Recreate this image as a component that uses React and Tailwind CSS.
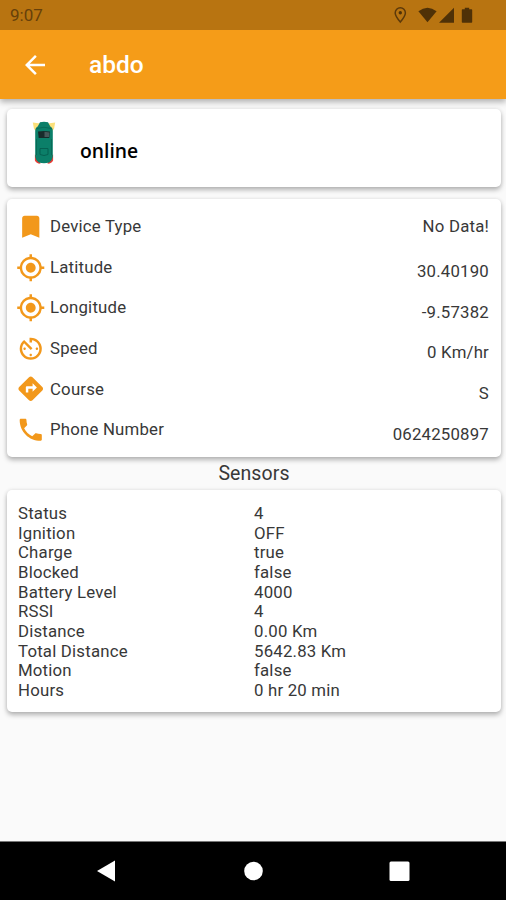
import {
    MdArrowBack,
    MdAvTimer,
    MdBookmark,
    MdDirections,
    MdGpsFixed,
    MdPhone,
} from 'react-icons/md';

const details = [
    { icon: MdBookmark, label: 'Device Type', value: 'No Data!' },
    { icon: MdGpsFixed, label: 'Latitude', value: '30.40190', low: true },
    { icon: MdGpsFixed, label: 'Longitude', value: '-9.57382', low: true },
    { icon: MdAvTimer, label: 'Speed', value: '0 Km/hr', low: true },
    { icon: MdDirections, label: 'Course', value: 'S', low: true },
    { icon: MdPhone, label: 'Phone Number', value: '0624250897', low: true },
];

const sensors = [
    ['Status', '4'],
    ['Ignition', 'OFF'],
    ['Charge', 'true'],
    ['Blocked', 'false'],
    ['Battery Level', '4000'],
    ['RSSI', '4'],
    ['Distance', '0.00 Km'],
    ['Total Distance', '5642.83 Km'],
    ['Motion', 'false'],
    ['Hours', '0 hr 20 min'],
];

function StatusBar() {
    return (
        <div className="h-[30px] bg-[#b87411] flex items-center justify-between pl-[10px] pr-[33px] text-[#66400a]">
            <span className="text-[17px] leading-none">9:07</span>
            <svg width="80" height="18" viewBox="0 0 80 18" fill="#4f3107">
                <path fill="none" stroke="#5c390a" strokeWidth="1.5" d="M7.3 16C4.5 12.600 2.200 9.500 2.200 6.900a5.100 5.100 0 0 1 10.200 0C12.400 9.500 10.100 12.600 7.300 16Z" />
                <circle cx="7.300" cy="6.800" r="1.700" />
                <path d="M25.400 5.200Q34.500-1.800 43.600 5.200L34.500 16.300Z" />
                <path d="M46 16.800 61 1.800V16.800Z" />
                <path d="M69.500 3.300h2.300V1.800h4.400v1.500h2.300q.7 0 .7.700v12q0 .8-.7.800h-9q-.7 0-.7-.8V4q0-.7.700-.7Z" />
            </svg>
        </div>
    );
}

// Vehicle seen from above, headlights on
function CarIcon() {
    return (
        <svg width="24" height="44" viewBox="0 0 24 44" className="shrink-0">
            <path d="M.8 1.500 8 2.500 4.500 10.500 2 8ZM23.200 1.500 16 2.500l3.500 8L22 8Z" fill="#fbe07a" />
            <path d="M2.900 33.500v6q1.200 3 5.500 3.300l-1-7ZM21.100 33.500v6q-1.200 3-5.500 3.300l1-7Z" fill="#ec3b35" />
            <path d="M8 1.300q4-1 8 0l2.300 4.200Q20.800 6.500 20.800 10V36q-.8 4-3.500 5.500-5.300 1.500-10.600 0-2.700-1.500-3.500-5.500V10q0-3.500 2.500-4.500Z" fill="#0b7f69" />
            <path d="M4.500 7.500q7.500-2.500 15 0M4.500 18v16M19.500 18v16" fill="none" stroke="#066653" strokeWidth=".8" />
            <path d="M6 10.500q6-1.200 12 0l-.7 6.500H6.700Z" fill="#182b2b" />
            <path d="m12.500 10.800 5 .6-.5 4.600h-4.500Z" fill="#46585a" />
            <path d="M8 27.500h8v6q-4 2-8 0Z" fill="none" stroke="#056151" strokeWidth="1" />
        </svg>
    );
}

function Card({ className, children }) {
    return (
        <div className={`bg-white rounded-[5px] shadow-[0_3px_5px_rgba(0,0,0,0.27),0_0_4px_rgba(0,0,0,0.09)] ${className}`}>
            {children}
        </div>
    );
}

function App() {
    return (
        <div className="w-[506px] h-[900px] bg-[#fafafa] font-[Roboto,sans-serif] text-[#383838] flex flex-col overflow-hidden">
            <header className="shrink-0 shadow-[0_3px_6px_rgba(0,0,0,0.3)]">
                <StatusBar />
                <div className="h-[69px] bg-[#f59c18] text-white flex items-center">
                    <MdArrowBack className="ml-5 size-[30px]" />
                    <h1 className="ml-[39px] text-[24.500px] font-medium leading-none pt-px">abdo</h1>
                </div>
            </header>

            <main className="flex-1 pt-[10px] pl-[7px] pr-[5px]">
                <Card className="h-[78px] flex pl-[25px]">
                    <div className="pt-[12px]">
                        <CarIcon />
                    </div>
                    <span className="ml-[24px] mt-[28px] text-[19.300px] leading-7 font-semibold text-black font-['Open_Sans',sans-serif]">online</span>
                </Card>

                <Card className="mt-3 h-[258px] pt-[7.500px] pl-[9px] pr-[12px]">
                    {details.map(({ icon: Icon, label, value, low }) => (
                        <div key={label} className="h-[40.600px] flex items-center text-[16.800px] tracking-[0.2px]">
                            <Icon className="size-[29.500px] text-[#f2981b]" />
                            <span className="ml-[4.500px]">{label}</span>
                            <span className={`ml-auto ${low ? 'pt-[9px]' : ''}`}>{value}</span>
                        </div>
                    ))}
                </Card>

                <h2 className="h-[33px] flex items-center justify-center pt-px text-[19.500px] tracking-[0.1px]">Sensors</h2>

                <Card className="h-[222px] pt-[13.500px] pl-[11px]">
                    {sensors.map(([label, value]) => (
                        <div key={label} className="h-[19.700px] flex items-center text-[16.800px] leading-none tracking-[0.2px]">
                            <span className="w-[236px]">{label}</span>
                            <span>{value}</span>
                        </div>
                    ))}
                </Card>
            </main>

            <nav className="h-[59px] shrink-0 bg-black border-t border-[#777] flex items-center">
                <svg width="506" height="58" viewBox="0 0 506 58" fill="white">
                    <path d="M97 29 115 18.500V39.500Z" />
                    <circle cx="253.500" cy="29" r="9.300" />
                    <rect x="389.500" y="19.500" width="20" height="19.500" rx="1.500" />
                </svg>
            </nav>
        </div>
    );
}

export default App;
